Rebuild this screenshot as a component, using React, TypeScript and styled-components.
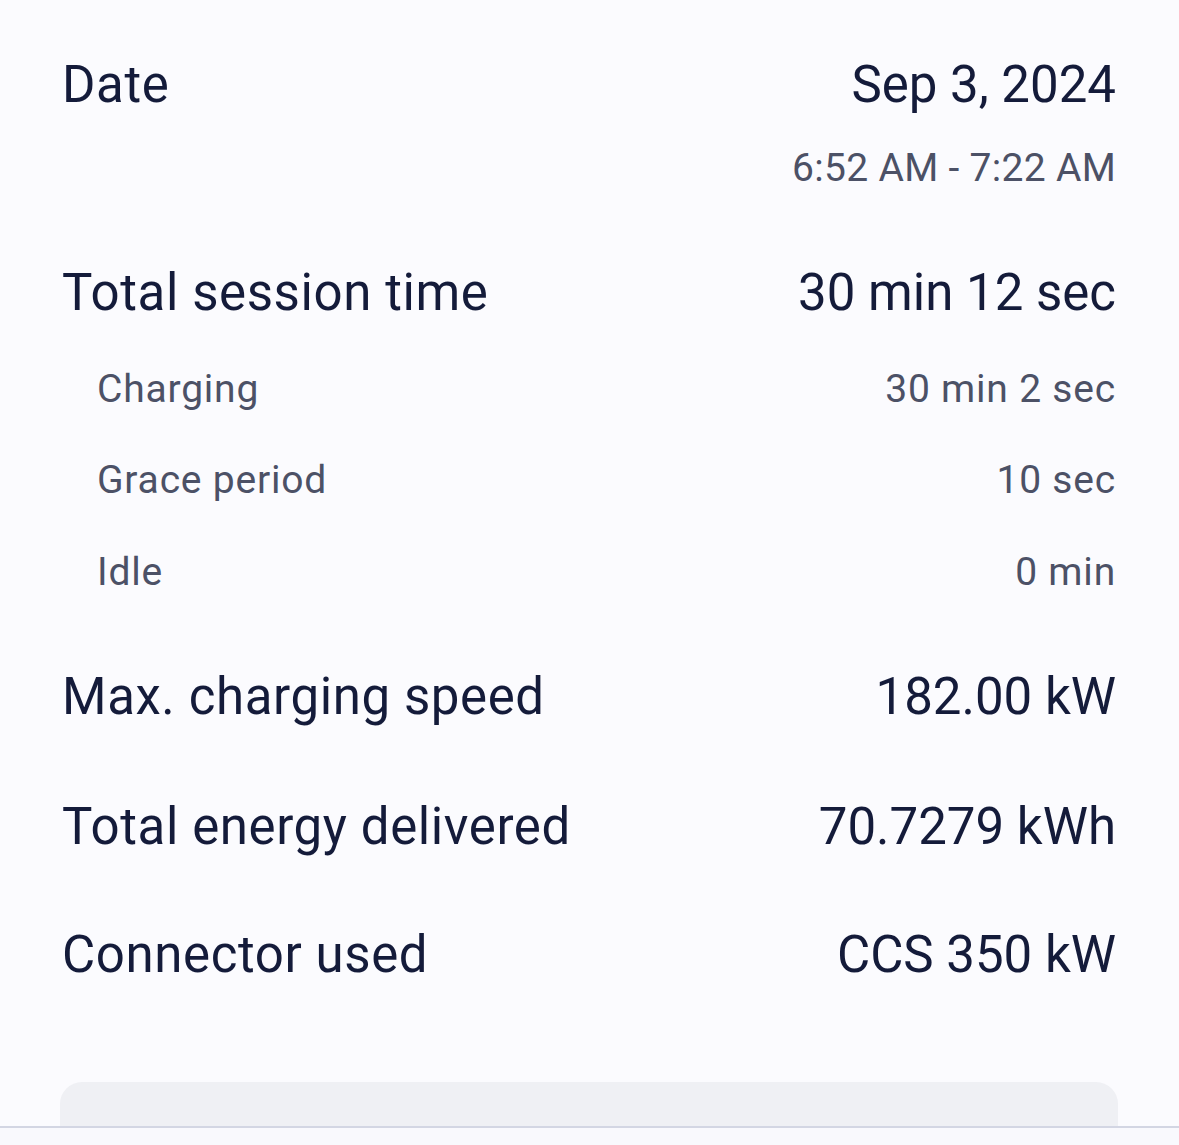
import React from "react";
import styled, { createGlobalStyle } from "styled-components";

const Global = createGlobalStyle`
  html, body { margin: 0; padding: 0; background: #fbfbfe; }
  body { font-family: Roboto, "Noto Sans", sans-serif; -webkit-font-smoothing: antialiased; }
`;

const Page = styled.div`
  width: 1179px;
  height: 1145px;
  box-sizing: border-box;
  background: #fbfbfe;
  display: flex;
  flex-direction: column;
  overflow: hidden;
`;

const Content = styled.div`
  padding: 52px 63px 0 62px;
  display: flex;
  flex-direction: column;
  flex: 1;
`;

const Row = styled.div<{ $mt?: number }>`
  display: flex;
  justify-content: space-between;
  align-items: baseline;
  margin-top: ${(p) => p.$mt ?? 0}px;
`;

const Label = styled.div`
  font-size: 51px;
  line-height: 66px;
  color: #141b3a;
  letter-spacing: 0.6px;
`;

const Value = styled(Label)`
  text-align: right;
  letter-spacing: 0px;
`;

const SubRow = styled(Row)`
  padding-left: 35px;
`;

const SubLabel = styled.div`
  font-size: 39px;
  line-height: 52px;
  color: #4c5166;
  letter-spacing: 0.8px;
`;

const SubValue = styled(SubLabel)`
  text-align: right;
`;

const TimeRange = styled.div`
  align-self: flex-end;
  font-size: 39px;
  line-height: 52px;
  color: #4c5166;
  letter-spacing: 0.3px;
  margin-top: 24px;
`;

const Card = styled.div`
  margin: auto 61px 0 60px;
  height: 44px;
  background: #eff0f4;
  border-radius: 22px 22px 0 0;
`;

const Divider = styled.div`
  height: 2px;
  background: #d3d6e3;
`;

const Footer = styled.div`
  height: 17px;
  background: #f9f9fd;
`;

export default function App() {
  return (
    <Page>
      <Global />
      <Content>
        <Row>
          <Label>Date</Label>
          <Value>Sep 3, 2024</Value>
        </Row>
        <TimeRange>6:52 AM - 7:22 AM</TimeRange>
        <Row $mt={66}>
          <Label>Total session time</Label>
          <Value>30 min 12 sec</Value>
        </Row>
        <SubRow $mt={37}>
          <SubLabel>Charging</SubLabel>
          <SubValue>30 min 2 sec</SubValue>
        </SubRow>
        <SubRow $mt={39}>
          <SubLabel>Grace period</SubLabel>
          <SubValue>10 sec</SubValue>
        </SubRow>
        <SubRow $mt={40}>
          <SubLabel>Idle</SubLabel>
          <SubValue>0 min</SubValue>
        </SubRow>
        <Row $mt={66}>
          <Label>Max. charging speed</Label>
          <Value>182.00 kW</Value>
        </Row>
        <Row $mt={64}>
          <Label>Total energy delivered</Label>
          <Value>70.7279 kWh</Value>
        </Row>
        <Row $mt={62}>
          <Label>Connector used</Label>
          <Value>CCS 350 kW</Value>
        </Row>
      </Content>
      <Card />
      <Divider />
      <Footer />
    </Page>
  );
}
